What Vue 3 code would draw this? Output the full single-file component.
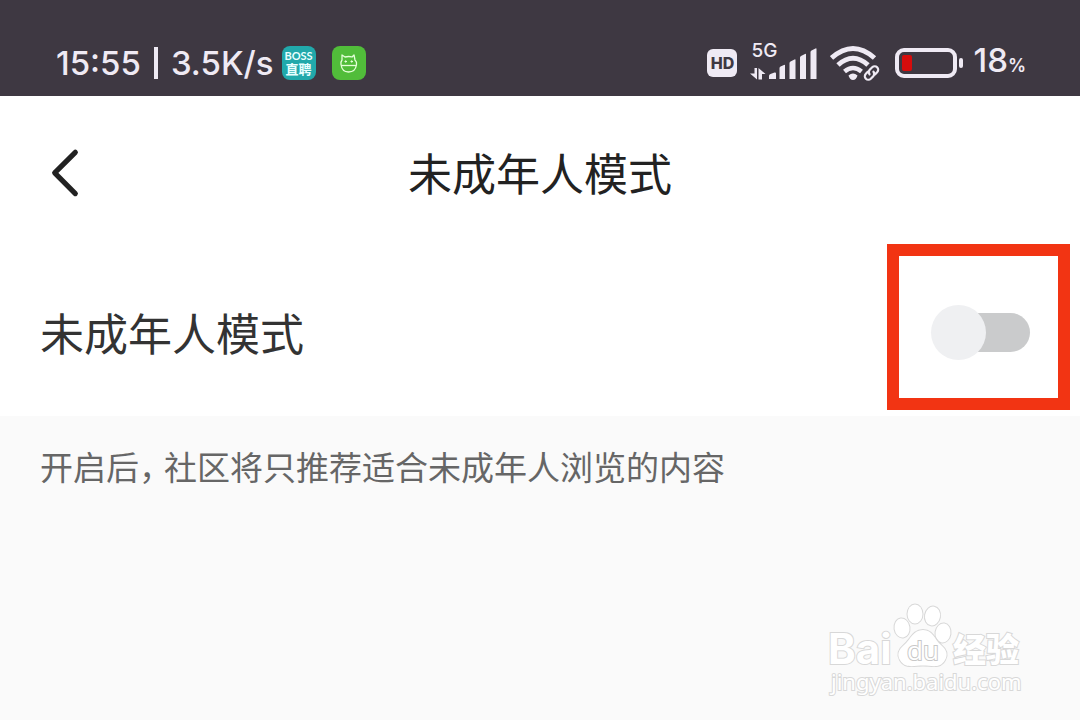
<script setup>
import { ref } from 'vue'

const minorMode = ref(false)
</script>

<template>
  <div class="screen">
    <div class="status">
      <div class="group">
        <span class="clock">15:55</span>
        <span class="divider"></span>
        <span class="speed">3.5K/s</span>
        <span class="app boss"><span class="boss-en">BOSS</span><span class="boss-cn">直聘</span></span>
        <span class="app green">
          <svg width="34" height="34" viewBox="0 0 34 34" fill="none" stroke="#e4ffd8" stroke-width="1.3" stroke-linejoin="round">
            <path d="M10 14V9L13 11Q17 10 20 11L22 9L23 14Q25 16 24.500 18.500Q23.500 26 16.500 26Q10 26 9 18.500Q8.500 16 10 14Z" />
            <path d="M9 19.500H24.500" />
            <path d="M12.500 15.500h2.500M13.700 14.300v2.400M18.500 15.500h2.500M19.700 14.300v2.400" stroke-width="1" />
          </svg>
        </span>
      </div>

      <div class="group">
        <span class="hd">HD</span>
        <span class="cell">
          <span class="net">5G</span>
          <svg width="68" height="34" viewBox="0 0 68 34" fill="#efeaf4">
            <path d="M4.500 22h2.500v11.500L0 27.500h4.500zM8.500 33.500V22l7 6H12v5.500z" />
            <path d="M19 33v-3q0-1.500 1.500-2l4-1.500q1.500-.5 1.500 1V33zM29.500 33V22q0-1 1-1.500l3.500-1.500q1-.5 1 .5V33zM39.500 33V17q0-1 1-1.500l4-2q1-.5 1 .5v19zM50 33V11.500q0-1 1-1.500l4-2q1-.5 1 .5V33zM60.500 33V6q0-1 1-1.500l4-2q1-.5 1 .5v30z" />
          </svg>
        </span>
        <svg class="wifi" width="50" height="36" viewBox="0 0 50 36" fill="none" stroke="#efeaf4">
          <path d="M1.500 13Q23 -6 44.500 13" stroke-width="5" />
          <path d="M8 20Q23 6.500 38 20" stroke-width="5" />
          <path d="M14.500 26.500Q23 19.500 31.500 26.500" stroke-width="4.500" />
          <path d="M18.500 30.500Q23 26.500 27.500 30.500Q26 35 23 35Q20 35 18.500 30.500Z" fill="#efeaf4" stroke="none" />
          <g transform="rotate(-45 41.500 28)" stroke="#3e3842" stroke-width="6">
            <path d="M42 24.500H38a3.500 3.500 0 0 0 0 7h3M41 31.500h4a3.500 3.500 0 0 0 0-7h-3" />
          </g>
          <g transform="rotate(-45 41.500 28)" stroke-width="2.200" stroke-linecap="round">
            <path d="M40 24.500H37a3.500 3.500 0 0 0 0 7h3.500a3.500 3.500 0 0 0 3.300-3M43 31.500h3a3.500 3.500 0 0 0 0-7h-3.500a3.500 3.500 0 0 0-3.300 3" />
          </g>
        </svg>
        <svg class="battery" width="70" height="32" viewBox="0 0 70 32">
          <rect x="2" y="3" width="58" height="26" rx="7" fill="none" stroke="#efeaf4" stroke-width="4" />
          <rect x="64" y="11" width="4" height="10" rx="2" fill="#efeaf4" />
          <rect x="7" y="8" width="10" height="16" rx="2" fill="#d60c0c" />
        </svg>
        <span class="percent">18<small>%</small></span>
      </div>
    </div>

    <header class="header">
      <button class="back" type="button" aria-label="返回">
        <svg width="32" height="52" viewBox="0 0 32 52" fill="none" stroke="#222" stroke-width="5.500" stroke-linecap="round" stroke-linejoin="round">
          <path d="M27 5L5 27L27 49" />
        </svg>
      </button>
      <h1>未成年人模式</h1>
    </header>

    <div class="setting">
      <label for="minor">未成年人模式</label>
      <span class="control">
        <input id="minor" v-model="minorMode" class="switch" type="checkbox" role="switch" />
        <span class="highlight"></span>
      </span>
    </div>

    <p class="note">开启后<span class="comma">，</span>社区将只推荐适合未成年人浏览的内容</p>

    <svg class="watermark" width="210" height="104" viewBox="0 0 210 104" fill="#fff" stroke="#d8d8d8" stroke-width="2" paint-order="stroke">
      <text x="6" y="64" class="wm-logo">Bai</text>
      <ellipse cx="80" cy="28" rx="7.500" ry="9.500" transform="rotate(-8 80 28)" />
      <ellipse cx="93" cy="14" rx="7.500" ry="9.500" />
      <ellipse cx="110.500" cy="16" rx="7.500" ry="9.500" transform="rotate(10 110.500 16)" />
      <ellipse cx="121" cy="33" rx="7.500" ry="9.500" transform="rotate(8 121 33)" />
      <path d="M101 30C91 30 89 39 82 45C76 50 75 55 78 60C83 69 92 65.500 101 65.500C110 65.500 118 69 123 60C126 55 125 50 119 45C112 39 111 30 101 30Z" />
      <text x="85" y="60" class="wm-du">du</text>
      <text x="131" y="62" class="wm-cn">经验</text>
      <text x="9" y="90" class="wm-url">jingyan.baidu.com</text>
    </svg>
  </div>
</template>

<style>
body {
  margin: 0;
  background: #fafafa;
}
</style>

<style scoped>
.screen {
  position: relative;
  min-height: 100vh;
  background: #fafafa;
  color: #333;
  font-family: "Noto Sans CJK SC", sans-serif;
}
.status {
  display: flex;
  justify-content: space-between;
  align-items: flex-start;
  box-sizing: border-box;
  height: 96px;
  padding: 43px 54px 0 56px;
  background: #3e3842;
  color: #efeaf4;
  font-family: Inter, "Noto Sans CJK SC", sans-serif;
  font-size: 33px;
  font-weight: 500;
  line-height: 42px;
}
.group {
  display: flex;
  align-items: center;
  height: 40px;
}
.divider {
  width: 4px;
  height: 32px;
  margin: 0 13px;
  background: #efeaf4;
}
.app {
  display: flex;
  flex-direction: column;
  align-items: center;
  justify-content: center;
  width: 34px;
  height: 34px;
  margin-left: 8px;
  border-radius: 8px;
}
.boss {
  background: #21a9ab;
  color: #e8ffff;
  font-family: Lato, "Noto Sans CJK SC", sans-serif;
  font-weight: 700;
}
.boss-en {
  font-size: 11px;
  line-height: 12px;
}
.boss-cn {
  font-size: 13px;
  line-height: 15px;
}
.green {
  margin-left: 16px;
  background: #51bd3a;
}
.hd {
  width: 30px;
  height: 28px;
  border-radius: 6px;
  background: #efeaf4;
  color: #3e3842;
  font-size: 16px;
  font-weight: 800;
  line-height: 28px;
  text-align: center;
}
.cell {
  position: relative;
  display: flex;
  margin-left: 13px;
}
.net {
  position: absolute;
  top: -7px;
  left: 1px;
  font-size: 19px;
  line-height: 24px;
}
.wifi {
  margin-left: 12px;
}
.battery {
  margin-left: 15px;
}
.percent {
  margin-left: 8px;
}
.percent small {
  font-size: 18px;
  font-weight: 600;
}
.header {
  display: grid;
  grid-template-columns: 80px 1fr 80px;
  align-items: center;
  box-sizing: border-box;
  height: 156px;
  padding-bottom: 4px;
  background: #fff;
}
.back {
  display: flex;
  margin: 0;
  padding: 0 0 0 50px;
  border: 0;
  background: none;
}
h1 {
  margin: 0;
  color: #222;
  font-size: 44px;
  font-weight: 400;
  line-height: 64px;
  text-align: center;
}
.setting {
  display: flex;
  justify-content: space-between;
  align-items: center;
  box-sizing: border-box;
  height: 164px;
  padding: 0 50px 4px 40px;
  background: #fff;
  font-size: 44px;
  line-height: 64px;
}
.control {
  position: relative;
  display: flex;
}
.switch {
  position: relative;
  width: 99px;
  height: 55px;
  margin: 0;
  appearance: none;
}
.switch::before {
  content: "";
  position: absolute;
  inset: 8px 0 8px 4px;
  border-radius: 20px;
  background: #cacbcc;
}
.switch::after {
  content: "";
  position: absolute;
  top: 0;
  left: 0;
  width: 55px;
  height: 55px;
  border-radius: 50%;
  background: #eff0f2;
}
.switch:checked::after {
  left: 44px;
}
.highlight {
  position: absolute;
  inset: -61px -40px -50px -44px;
  border: 12px solid #f23413;
  pointer-events: none;
}
.note {
  margin: 0;
  padding: 26px 40px;
  color: #666;
  font-size: 33px;
  line-height: 48px;
}
.comma {
  display: inline-block;
  width: 25px;
  font-feature-settings: "halt";
}
.watermark {
  position: absolute;
  right: 48px;
  bottom: 16px;
}
.wm-logo {
  font: 700 42px Inter, sans-serif;
}
.wm-du {
  font: 400 26px "Open Sans", sans-serif;
  stroke: #c8c8c8;
}
.wm-cn {
  font: 900 33px "Noto Sans CJK SC", sans-serif;
}
.wm-url {
  font: 400 22px "Noto Sans", sans-serif;
}
</style>
